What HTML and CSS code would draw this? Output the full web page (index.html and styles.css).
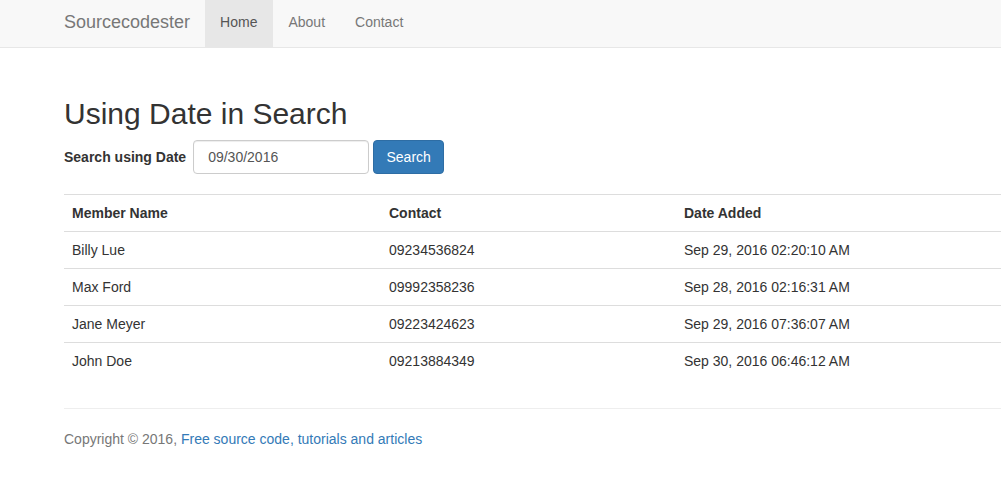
FILE: index.html
```html
<!DOCTYPE html>
<html>
<head>
<meta charset="utf-8">
<title>Using Date in Search</title>
<link rel="stylesheet" href="styles.css">
</head>
<body>
<nav class="navbar">
  <div class="nav-inner">
    <a class="brand" href="#">Sourcecodester</a>
    <ul class="nav-links">
      <li><a class="active" href="#">Home</a></li>
      <li><a href="#">About</a></li>
      <li><a href="#">Contact</a></li>
    </ul>
  </div>
</nav>
<main class="page">
  <h2 class="title">Using Date in Search</h2>
  <form class="search-form">
    <label class="search-label" for="date">Search using Date</label>
    <input class="date-input" id="date" type="text" value="09/30/2016">
    <button class="btn-primary" type="button">Search</button>
  </form>
  <table class="data-table">
    <thead>
      <tr><th class="col-name">Member Name</th><th class="col-contact">Contact</th><th>Date Added</th></tr>
    </thead>
    <tbody>
      <tr><td>Billy Lue</td><td>09234536824</td><td>Sep 29, 2016 02:20:10 AM</td></tr>
      <tr><td>Max Ford</td><td>09992358236</td><td>Sep 28, 2016 02:16:31 AM</td></tr>
      <tr><td>Jane Meyer</td><td>09223424623</td><td>Sep 29, 2016 07:36:07 AM</td></tr>
      <tr><td>John Doe</td><td>09213884349</td><td>Sep 30, 2016 06:46:12 AM</td></tr>
    </tbody>
  </table>
  <hr class="divider">
  <footer class="footer">Copyright © 2016, <a href="#">Free source code, tutorials and articles</a></footer>
</main>
</body>
</html>
```
FILE: styles.css
```css
html, body {
  margin: 0;
  padding: 0;
  overflow: hidden;
}
body {
  font-family: "Liberation Sans", Arial, sans-serif;
  font-size: 14px;
  line-height: 20px;
  color: #333;
  background: #fff;
  width: 1001px;
}
a { text-decoration: none; }

.navbar {
  background: #f8f8f8;
  border-bottom: 1px solid #e7e7e7;
  height: 47px;
}
.nav-inner {
  display: flex;
  padding-left: 49px;
  height: 47px;
}
.brand {
  font-size: 18px;
  color: #777;
  padding: 0 15px;
  line-height: 45px;
  height: 47px;
}
.nav-links {
  display: flex;
  list-style: none;
  margin: 0;
  padding: 0;
}
.nav-links a {
  display: block;
  padding: 0 15px;
  line-height: 45px;
  height: 47px;
  color: #777;
}
.nav-links a.active {
  background: #e7e7e7;
  color: #555;
  padding: 0 16px 0 15px;
}

.page {
  padding: 49px 0 0 64px;
  width: 1140px;
}
.title {
  font-size: 30px;
  font-weight: 500;
  line-height: 33px;
  margin: 0 0 10px;
  color: #333;
}
.search-form {
  display: flex;
  align-items: center;
  gap: 4px;
  height: 34px;
  margin: 0 0 20px;
}
.search-label {
  font-weight: bold;
  font-size: 14px;
  margin-right: 3px;
}
.date-input {
  box-sizing: border-box;
  width: 176px;
  height: 34px;
  border: 1px solid #ccc;
  border-radius: 4px;
  padding: 6px 12px 6px 14px;
  font-family: inherit;
  font-size: 14px;
  color: #555;
  box-shadow: inset 0 1px 1px rgba(0,0,0,.075);
  outline: none;
}
.btn-primary {
  box-sizing: border-box;
  height: 34px;
  width: 71px;
  background: #337ab7;
  border: 1px solid #2e6da4;
  border-radius: 4px;
  color: #fff;
  font-family: inherit;
  font-size: 14px;
  padding: 0;
}

.data-table {
  width: 1140px;
  border-collapse: collapse;
  border-spacing: 0;
  margin-bottom: 29px;
}
.data-table th,
.data-table td {
  text-align: left;
  padding: 8px;
  line-height: 20px;
  border-top: 1px solid #ddd;
  vertical-align: top;
}
.data-table th {
  font-weight: bold;
  font-size: 14px;
}
.data-table td {
  font-size: 14px;
}
.col-name { width: 301px; }
.col-contact { width: 279px; }

.divider {
  margin: 0;
  border: 0;
  border-top: 1px solid #eee;
  width: 1140px;
}
.footer {
  padding-top: 20px;
  color: #777;
  font-size: 14px;
}
.footer a { color: #337ab7; }
```
